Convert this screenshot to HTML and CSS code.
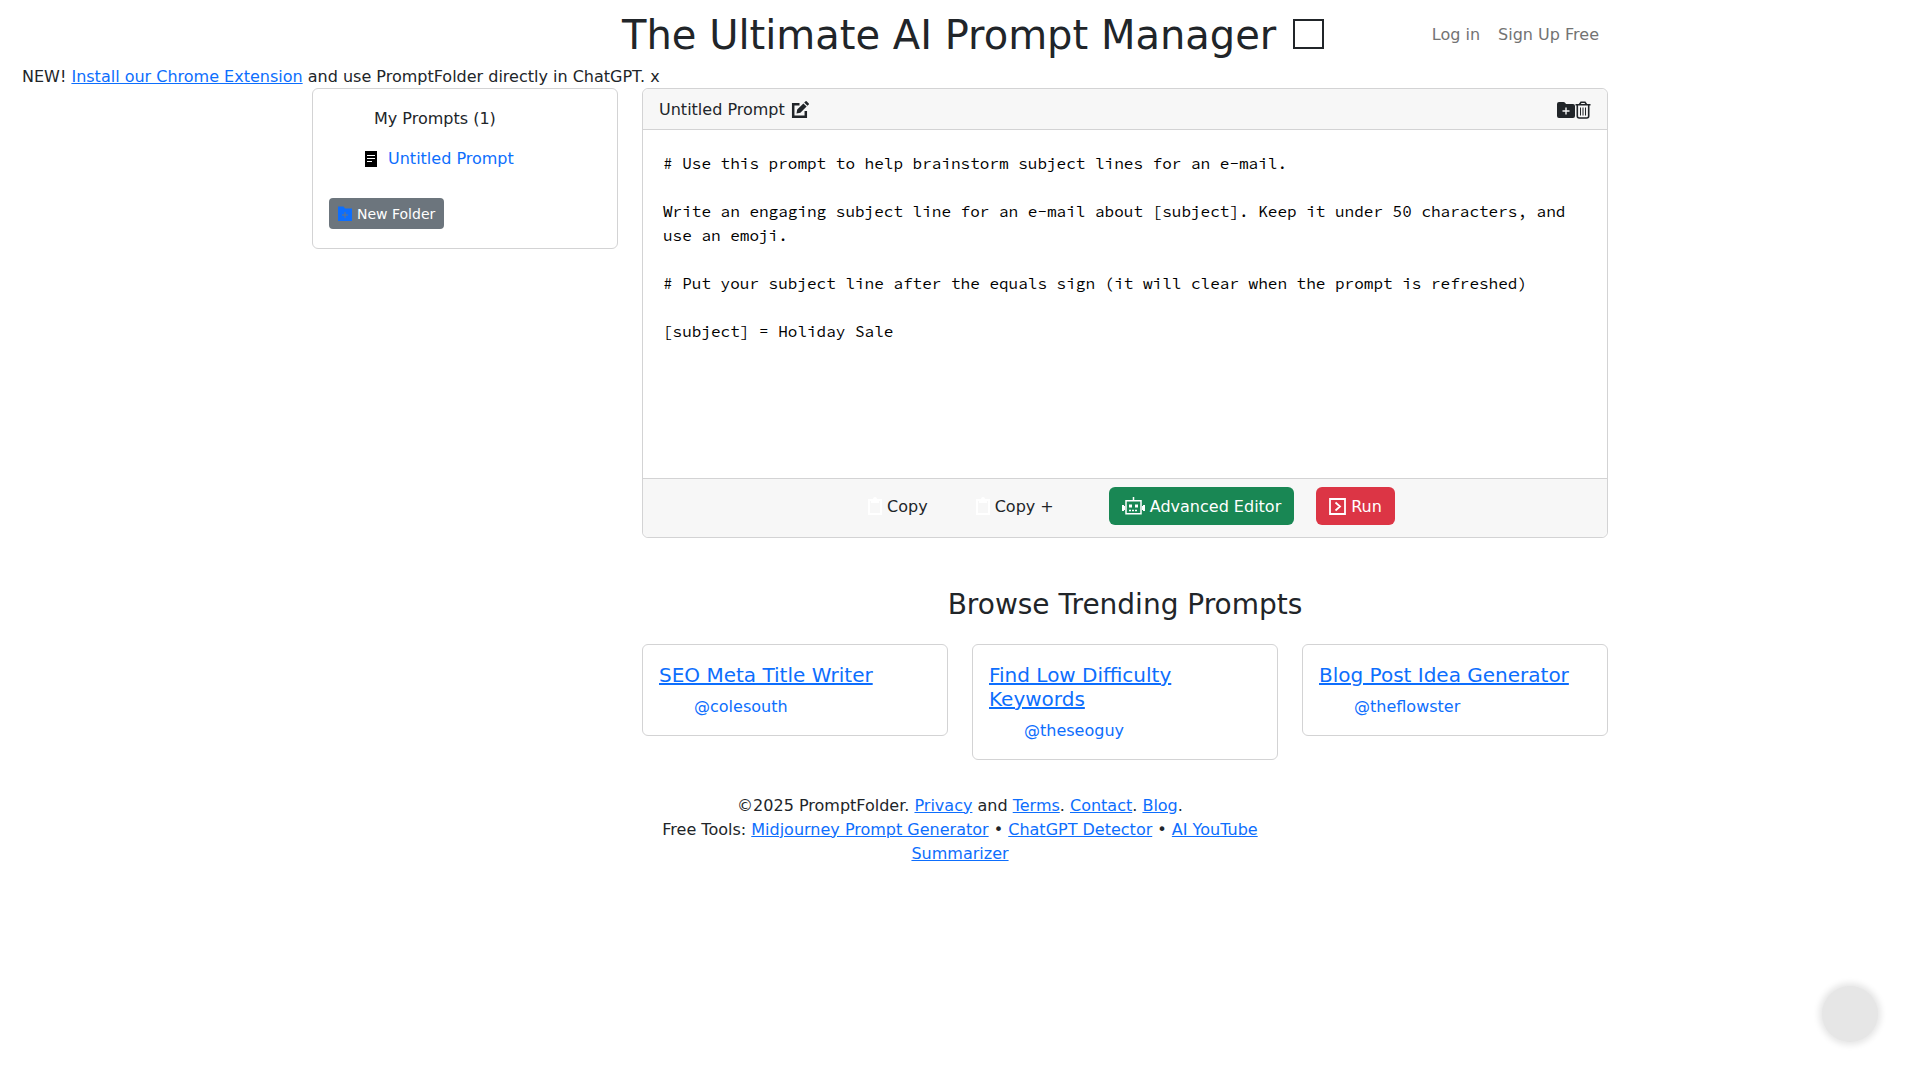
FILE: index.html
```html
<!DOCTYPE html>
<html lang="en">
<head>
  <meta charset="UTF-8">
  <meta name="viewport" content="width=device-width, initial-scale=1.0">
  <title>PromptFolder</title>
  <link rel="stylesheet" href="styles.css">
</head>
<body>
  <header class="container navbar">
    <h1>The Ultimate AI Prompt Manager <span class="title-box"></span></h1>
    <nav class="nav-links">
      <a href="#">Log in</a>
      <a href="#">Sign Up Free</a>
    </nav>
  </header>

  <div class="announcement">
    NEW! <a href="#">Install our Chrome Extension</a> and use PromptFolder directly in ChatGPT. <span>x</span>
  </div>

  <main class="container layout">
    <!-- Prompt list -->
    <aside class="card sidebar">
      <div class="folder-name">My Prompts (1)</div>
      <a class="prompt-item" href="#">
        <svg width="12" height="16" viewBox="0 0 12 16"><path fill="#000" d="M0 0h12v16H0z"/><path stroke="#fff" d="M2 4.5h8M2 7.5h8M2 10.5h5"/></svg>
        Untitled Prompt
      </a>
      <button class="btn btn-small" type="button">
        <svg width="16" height="16" viewBox="0 0 16 16"><path fill="#0d6efd" fill-rule="evenodd" d="M1 2V.5h5.500L8 2.500h7V15H1zM7.500 6v2.500H5v1h2.500V12h1V9.500H11v-1H8.500V6z"/></svg>
        New Folder
      </button>
    </aside>

    <div class="content">
      <!-- Editor -->
      <section class="card editor">
        <div class="card-header">
          <span>Untitled Prompt</span>
          <button class="icon-btn" type="button" aria-label="Rename">
            <svg width="18" height="18" viewBox="0 0 18 18"><path fill="none" stroke="#212529" stroke-width="2.5" d="M8.500 3.200H2.200v12.600h12.600V10"/><path fill="#212529" d="M5.500 12.500l.7-3.900 6.200-6.200 3.200 3.200-6.200 6.200zM13.200 1.600L14.600.2q.5-.4 1 0l2.200 2.200q.4.500 0 1l-1.400 1.400z"/></svg>
          </button>
          <div class="header-actions">
            <button class="icon-btn" type="button" aria-label="Add to folder">
              <svg width="18" height="16" viewBox="0 0 18 16"><path fill="#212529" fill-rule="evenodd" d="M2 0h4.500q1 0 1.600.8L9 2h7q2 0 2 2v10q0 2-2 2H2q-2 0-2-2V2q0-2 2-2zM8.300 5.500v2.800H5.500v1.400h2.800v2.800h1.400V9.700h2.800V8.300H9.700V5.500z"/></svg>
            </button>
            <button class="icon-btn" type="button" aria-label="Delete">
              <svg width="16" height="18" viewBox="0 0 16 18"><path fill="none" stroke="#212529" stroke-width="1.6" d="M.5 3.800h15M4.500 3.500L6 1.300h4l1.500 2.200M2.300 4v11q0 2 2 2h7.400q2 0 2-2V4"/><path fill="none" stroke="#212529" d="M5.500 6.500v8M8 6.500v8M10.500 6.500v8"/></svg>
            </button>
          </div>
        </div>
        <textarea aria-label="Prompt" spellcheck="false"># Use this prompt to help brainstorm subject lines for an e-mail.

Write an engaging subject line for an e-mail about [subject]. Keep it under 50 characters, and use an emoji.

# Put your subject line after the equals sign (it will clear when the prompt is refreshed)

[subject] = Holiday Sale</textarea>
        <div class="card-footer">
          <button class="btn btn-plain" type="button">
            <svg width="14" height="18" viewBox="0 0 14 18"><path fill="none" stroke="#fff" stroke-width="2" d="M1 3h12v14H1z"/><path fill="#fff" d="M3 2h2Q5 0 7 0t2 2h2v4H3z"/></svg>
            Copy
          </button>
          <button class="btn btn-plain" type="button">
            <svg width="14" height="18" viewBox="0 0 14 18"><path fill="none" stroke="#fff" stroke-width="2" d="M1 3h12v14H1z"/><path fill="#fff" d="M3 2h2Q5 0 7 0t2 2h2v4H3z"/></svg>
            Copy +
          </button>
          <button class="btn btn-green" type="button">
            <svg width="23" height="18" viewBox="0 0 23 18"><path fill="none" stroke="#fff" stroke-width="1.5" d="M4 3.800h15v13H4zM11.500 0v4"/><path fill="#fff" d="M0 8h2v6H0zM21 8h2v6h-2zM2 9h1v4H2zM20 9h1v4h-1zM7 7.500h3v3H7zM13 7.500h3v3h-3z"/><path stroke="#fff" stroke-width="1.5" stroke-dasharray="2 1" d="M7 13.500h9"/></svg>
            Advanced Editor
          </button>
          <button class="btn btn-red" type="button">
            <svg width="17" height="17" viewBox="0 0 17 17"><path fill="none" stroke="#fff" stroke-width="1.8" d="M1 1h15v15H1zM6.500 4.500l4.500 4-4.500 4"/></svg>
            Run
          </button>
        </div>
      </section>

      <!-- Trending -->
      <h3>Browse Trending Prompts</h3>
      <div class="trending">
        <div class="card trend">
          <h5><a href="#">SEO Meta Title Writer</a></h5>
          <a class="author" href="#">@colesouth</a>
        </div>
        <div class="card trend">
          <h5><a href="#">Find Low Difficulty Keywords</a></h5>
          <a class="author" href="#">@theseoguy</a>
        </div>
        <div class="card trend">
          <h5><a href="#">Blog Post Idea Generator</a></h5>
          <a class="author" href="#">@theflowster</a>
        </div>
      </div>
    </div>
  </main>

  <footer class="footer">
    ©2025 PromptFolder. <a href="#">Privacy</a> and <a href="#">Terms</a>. <a href="#">Contact</a>. <a href="#">Blog</a>.<br>
    Free Tools: <a href="#">Midjourney Prompt Generator</a> • <a href="#">ChatGPT Detector</a> • <a href="#">AI YouTube Summarizer</a>
  </footer>

  <button class="chat-button" type="button" aria-label="Open chat"></button>
</body>
</html>
```

FILE: styles.css
```css
* {
  box-sizing: border-box;
}
body {
  margin: 0;
  font-family: "DejaVu Sans", sans-serif;
  font-size: 16px;
  line-height: 24px;
  color: #212529;
  background-color: #fff;
}
a {
  color: #0d6efd;
}
h1, h3, h5 {
  margin: 0;
  font-weight: 500;
  line-height: 1.2;
}
h1 {
  font-size: 40px;
}
h3 {
  font-size: 28px;
}
h5 {
  font-size: 20px;
  margin-bottom: 8px;
}
button {
  font-family: inherit;
  cursor: pointer;
}
svg {
  flex: none;
}
.container {
  max-width: 1320px;
  margin: 0 auto;
  padding: 0 12px;
}
.navbar {
  display: grid;
  grid-template-columns: 1fr auto 1fr;
  align-items: center;
  padding-top: 11px;
  padding-bottom: 6px;
}
.navbar h1 {
  grid-column: 2;
  padding-left: 26px;
}
.title-box {
  display: inline-block;
  width: 31px;
  height: 30px;
  margin-left: 4px;
  border: 2px solid #212529;
}
.nav-links {
  display: flex;
  justify-content: flex-end;
  gap: 18px;
  padding-right: 9px;
}
.nav-links a {
  color: #737373;
  text-decoration: none;
}
.announcement {
  padding: 0 22px;
  line-height: 23px;
}
.layout {
  display: grid;
  grid-template-columns: minmax(0, 306fr) minmax(0, 966fr);
  gap: 24px;
  align-items: start;
}
.card {
  border: 1px solid #d3d3d4;
  border-radius: 6px;
  background-color: #fff;
}
.sidebar {
  padding: 18px 16px 19px;
}
.folder-name {
  padding-left: 45px;
  margin-bottom: 16px;
}
.prompt-item {
  display: flex;
  align-items: center;
  gap: 11px;
  padding-left: 36px;
  margin-bottom: 27px;
  text-decoration: none;
}
.btn {
  display: inline-flex;
  align-items: center;
  gap: 5px;
  height: 38px;
  padding: 0 13px;
  border: none;
  border-radius: 6px;
  font-size: 16px;
  color: #fff;
}
.btn-small {
  height: 31px;
  padding: 0 9px 0 8px;
  gap: 4px;
  border-radius: 4px;
  font-size: 14px;
  background-color: #6c757d;
}
.btn-plain {
  color: #212529;
  background: none;
}
.btn-green {
  margin-left: 20px;
  background-color: #198754;
}
.btn-red {
  background-color: #dc3545;
}
.icon-btn {
  display: flex;
  padding: 0;
  border: none;
  background: none;
}
.card-header {
  display: flex;
  align-items: center;
  gap: 6px;
  padding: 9px 16px 7px;
  border-bottom: 1px solid #d3d3d4;
  border-radius: 6px 6px 0 0;
  background-color: #f7f7f7;
}
.header-actions {
  display: flex;
  align-items: center;
  margin-left: auto;
}
.editor textarea {
  display: block;
  width: 100%;
  height: 348px;
  padding: 21px 20px;
  border: none;
  outline: none;
  resize: none;
  font-family: "Source Code Pro", monospace;
  font-size: 16px;
  line-height: 24px;
  color: #000;
}
.card-footer {
  display: flex;
  justify-content: center;
  gap: 22px;
  padding: 8px 16px 12px;
  border-top: 1px solid #d3d3d4;
  border-radius: 0 0 6px 6px;
  background-color: #f7f7f7;
}
.content h3 {
  margin: 50px 0 22px;
  text-align: center;
}
.trending {
  display: grid;
  grid-template-columns: repeat(3, minmax(0, 1fr));
  gap: 24px;
  align-items: start;
}
.trend {
  padding: 18px 16px 16px;
}
.author {
  display: block;
  padding-left: 35px;
  text-decoration: none;
}
.footer {
  max-width: 636px;
  margin: 34px auto 0;
  text-align: center;
}
.chat-button {
  position: fixed;
  right: 42px;
  bottom: 38px;
  width: 56px;
  height: 56px;
  border: none;
  border-radius: 50%;
  background-color: #e6e6e6;
  box-shadow: 0 0 6px 3px #e6e6e6;
}
```
